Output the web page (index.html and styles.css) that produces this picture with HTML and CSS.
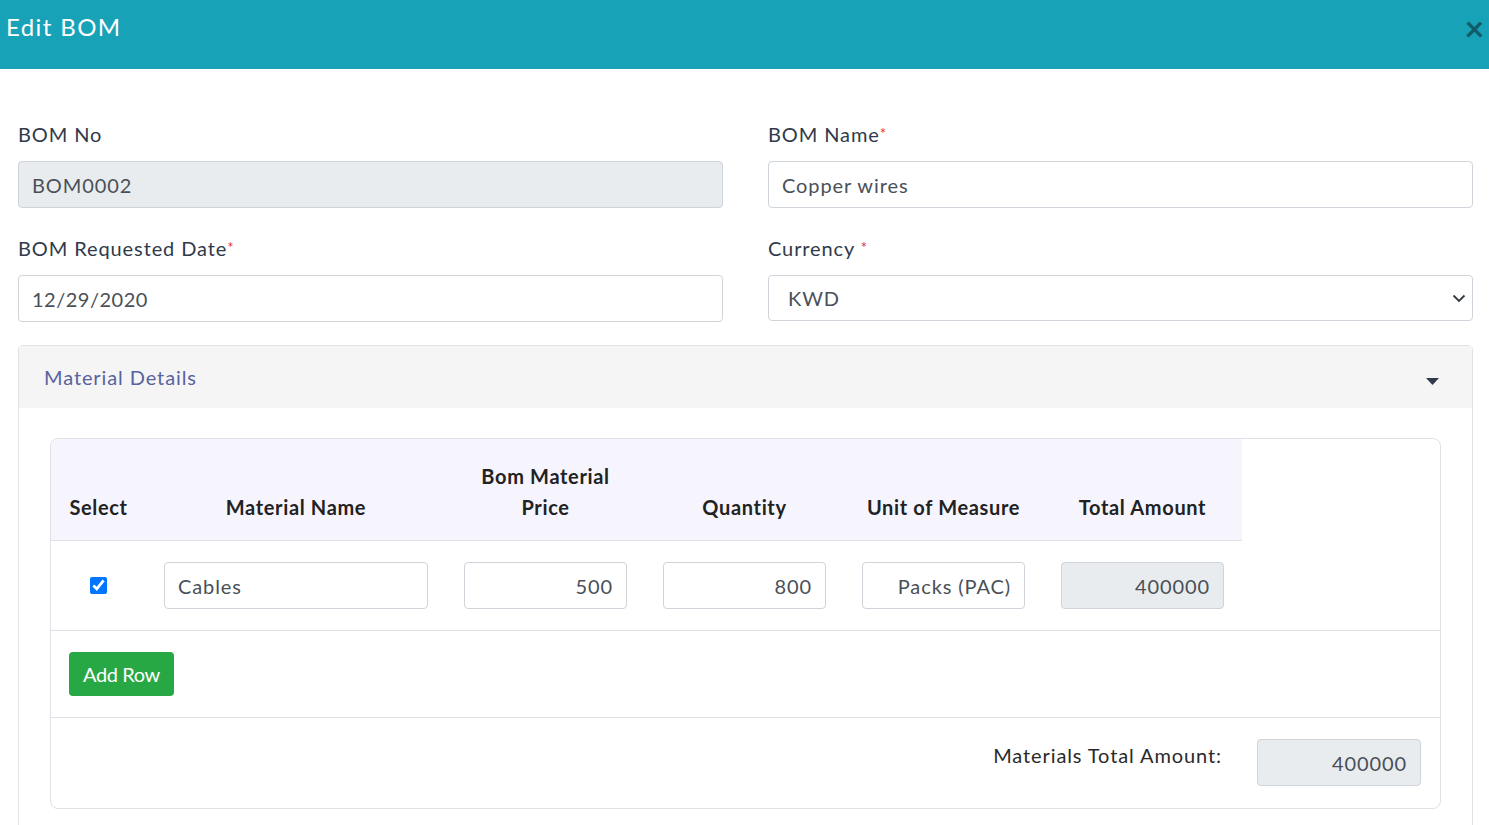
FILE: index.html
```html
<!DOCTYPE html>
<html lang="en">
<head>
  <meta charset="UTF-8">
  <title>Edit BOM</title>
  <link rel="stylesheet" href="styles.css">
</head>
<body>
  <div class="modal-header">
    <h1>Edit BOM</h1>
    <span class="close">&times;</span>
  </div>

  <div class="modal-body">
    <div class="form-grid">
      <div class="field">
        <label>BOM No</label>
        <input class="form-control" type="text" value="BOM0002" disabled>
      </div>
      <div class="field">
        <label>BOM Name<span class="req">*</span></label>
        <input class="form-control" type="text" value="Copper wires">
      </div>
      <div class="field">
        <label>BOM Requested Date<span class="req">*</span></label>
        <input class="form-control date" type="text" value="12/29/2020">
      </div>
      <div class="field">
        <label>Currency <span class="req">*</span></label>
        <div class="select-wrap">
          <select class="form-control select">
            <option>KWD</option>
          </select>
          <svg class="chevron" width="14" height="9" viewBox="0 0 14 9"><path d="M1.5 1.5 7 7l5.5-5.5" fill="none" stroke="#343a40" stroke-width="1.8"/></svg>
        </div>
      </div>
    </div>

    <div class="accordion">
      <div class="accordion-head">
        <span>Material Details</span>
        <svg width="13" height="7" viewBox="0 0 13 7"><path d="M0 0h13L6.5 7z" fill="#2f3b4c"/></svg>
      </div>
      <div class="accordion-body">
        <div class="materials">
          <table class="mat-table">
            <thead>
              <tr>
                <th class="c-select">Select</th>
                <th class="c-name">Material Name</th>
                <th class="c-num">Bom Material<br>Price</th>
                <th class="c-num">Quantity</th>
                <th class="c-num">Unit of Measure</th>
                <th class="c-num">Total Amount</th>
              </tr>
            </thead>
            <tbody>
              <tr>
                <td class="c-select"><input type="checkbox" checked></td>
                <td><input class="form-control" type="text" value="Cables"></td>
                <td><input class="form-control right" type="text" value="500"></td>
                <td><input class="form-control right" type="text" value="800"></td>
                <td><input class="form-control right" type="text" value="Packs (PAC)"></td>
                <td><input class="form-control right" type="text" value="400000" disabled></td>
              </tr>
            </tbody>
          </table>
          <div class="actions">
            <button class="btn-add">Add Row</button>
          </div>
          <div class="totals">
            <span>Materials Total Amount:</span>
            <input class="form-control right total-input" type="text" value="400000" disabled>
          </div>
        </div>
      </div>
    </div>
  </div>
</body>
</html>
```

FILE: styles.css
```css
body {
  margin: 0;
  font-family: Lato, "Open Sans", sans-serif;
  letter-spacing: 0.9px;
  background: #fff;
  color: #2f3a4a;
}
.modal-header {
  height: 69px;
  background: #18a2b8;
  display: flex;
  justify-content: space-between;
  align-items: flex-start;
}
.modal-header h1 {
  margin: 12px 0 0 6px;
  font-size: 24px;
  font-weight: 400;
  letter-spacing: 1.4px;
  color: #fff;
}
.close {
  margin: 9px 4px 0 0;
  font-size: 34px;
  line-height: 38px;
  font-weight: 700;
  color: #0e4f5a;
  opacity: 0.85;
}
.modal-body {
  padding: 53px 16px 0 18px;
}
.form-grid {
  display: grid;
  grid-template-columns: 705px 705px;
  column-gap: 45px;
  row-gap: 28px;
}
.field label {
  display: block;
  font-size: 20px;
  line-height: 24px;
  height: 24px;
  margin-bottom: 15px;
  color: #2f3a4a;
}
.req {
  position: relative;
  top: -3px;
  line-height: 0;
  color: #e3342f;
  font-size: 15px;
  letter-spacing: 0;
}
.form-control {
  box-sizing: border-box;
  width: 100%;
  height: 47px;
  padding: 0 13px;
  font-family: Lato, sans-serif;
  font-size: 20px;
  letter-spacing: 0.9px;
  color: #495057;
  background: #fff;
  border: 1px solid #ced4da;
  border-radius: 4px;
  outline: none;
}
.form-control.date {
  letter-spacing: 0.5px;
}
.form-control:disabled {
  background: #e9ecef;
  color: #495057;
  -webkit-text-fill-color: #495057;
  opacity: 1;
}
.form-control.right {
  text-align: right;
}
.select-wrap {
  position: relative;
}
.select {
  height: 46px;
  padding-left: 19px;
  -webkit-appearance: none;
  appearance: none;
}
.chevron {
  position: absolute;
  right: 7px;
  top: 19px;
}
.accordion {
  margin-top: 23px;
  border: 1px solid #e2e2e2;
  border-radius: 5px;
}
.accordion-head {
  height: 62px;
  background: #f5f5f5;
  display: flex;
  align-items: center;
  justify-content: space-between;
  padding: 0 33px 0 25px;
}
.accordion-head span {
  font-size: 20px;
  color: #5863a0;
}
.accordion-head svg {
  margin-top: 8px;
}
.accordion-body {
  padding: 30px 31px 20px 31px;
}
.materials {
  border: 1px solid #dee2e6;
  border-radius: 8px;
  overflow: hidden;
}
.mat-table {
  border-collapse: collapse;
}
.mat-table th {
  background: #f6f5fe;
  font-size: 20px;
  font-weight: 700;
  line-height: 31px;
  letter-spacing: 0.65px;
  color: #222;
  padding: 22px 18px 17px;
  vertical-align: bottom;
  text-align: center;
  border-bottom: 1px solid #dee2e6;
}
.mat-table th.c-select {
  width: 59px;
}
.mat-table th.c-name {
  width: 264px;
}
.mat-table th.c-num {
  width: 163px;
}
.mat-table td {
  padding: 21px 18px;
  text-align: center;
  vertical-align: middle;
}
.mat-table td .form-control {
  height: 47px;
}
.mat-table input[type=checkbox] {
  display: block;
  width: 17px;
  height: 17px;
  margin: 0 auto;
}
.actions {
  border-top: 1px solid #dee2e6;
  padding: 21px 18px;
}
.btn-add {
  height: 44px;
  padding: 0 14px;
  font-family: Lato, sans-serif;
  font-size: 20px;
  letter-spacing: -0.4px;
  color: #fff;
  background: #28a745;
  border: none;
  border-radius: 4px;
}
.totals {
  border-top: 1px solid #dee2e6;
  display: flex;
  justify-content: flex-end;
  align-items: flex-start;
  gap: 35px;
  padding: 21px 19px 22px 0;
}
.totals span {
  margin-top: 4px;
  font-size: 20px;
  line-height: 24px;
  color: #2a2a2a;
}
.total-input {
  width: 164px;
}
```
